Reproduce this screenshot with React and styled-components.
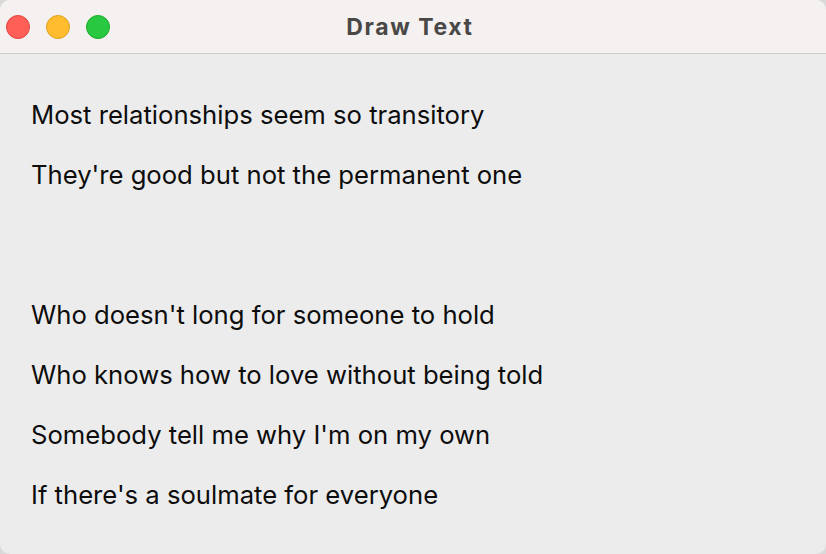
import React from "react";
import styled, { createGlobalStyle } from "styled-components";

const GlobalStyle = createGlobalStyle`
  html, body {
    margin: 0;
    padding: 0;
    background: #d9d9d9;
  }
  #root {
    width: 826px;
    height: 554px;
  }
`;

const Window = styled.div`
  width: 826px;
  height: 554px;
  display: flex;
  flex-direction: column;
  background: #ececec;
  border-radius: 10px;
  overflow: hidden;
  box-sizing: border-box;
`;

const TitleBar = styled.div`
  height: 53px;
  flex: none;
  display: flex;
  align-items: center;
  position: relative;
  background: #f4f1f0;
  border-bottom: 1px solid #cfcccb;
`;

const Lights = styled.div`
  display: flex;
  gap: 16px;
  padding-left: 6px;
  padding-top: 1px;
`;

const Light = styled.span`
  width: 24px;
  height: 24px;
  border-radius: 50%;
  box-sizing: border-box;
  background: ${(p) => p.color};
  border: 1px solid ${(p) => p.edge};
`;

const Title = styled.div`
  position: absolute;
  left: 0;
  right: 0;
  top: 0;
  bottom: 0;
  display: flex;
  align-items: center;
  justify-content: center;
  pointer-events: none;
  font-family: Inter, "Liberation Sans", sans-serif;
  font-weight: 700;
  font-size: 23px;
  letter-spacing: 1.6px;
  color: #4a4847;
  padding-right: 6px;
`;

const Content = styled.div`
  padding: 31px 0 0 31px;
  display: flex;
  flex-direction: column;
`;

const Line = styled.div`
  font-family: Inter, "Liberation Sans", sans-serif;
  font-size: 25.65px;
  line-height: 60px;
  height: 60px;
  color: #0d0d0d;
  white-space: nowrap;
  margin-top: ${(p) => (p.gap ? "80px" : "0")};
`;

const lines = [
  { text: "Most relationships seem so transitory" },
  { text: "They're good but not the permanent one" },
  { text: "Who doesn't long for someone to hold", gap: true },
  { text: "Who knows how to love without being told" },
  { text: "Somebody tell me why I'm on my own" },
  { text: "If there's a soulmate for everyone" },
];

export default function App() {
  return (
    <>
      <GlobalStyle />
      <Window>
        <TitleBar>
          <Lights>
            <Light color="#ff5f57" edge="#e0443e" />
            <Light color="#febc2e" edge="#dea123" />
            <Light color="#28c840" edge="#1aab29" />
          </Lights>
          <Title>Draw Text</Title>
        </TitleBar>
        <Content>
          {lines.map((l, i) => (
            <Line key={i} gap={l.gap ? 1 : 0}>
              {l.text}
            </Line>
          ))}
        </Content>
      </Window>
    </>
  );
}
